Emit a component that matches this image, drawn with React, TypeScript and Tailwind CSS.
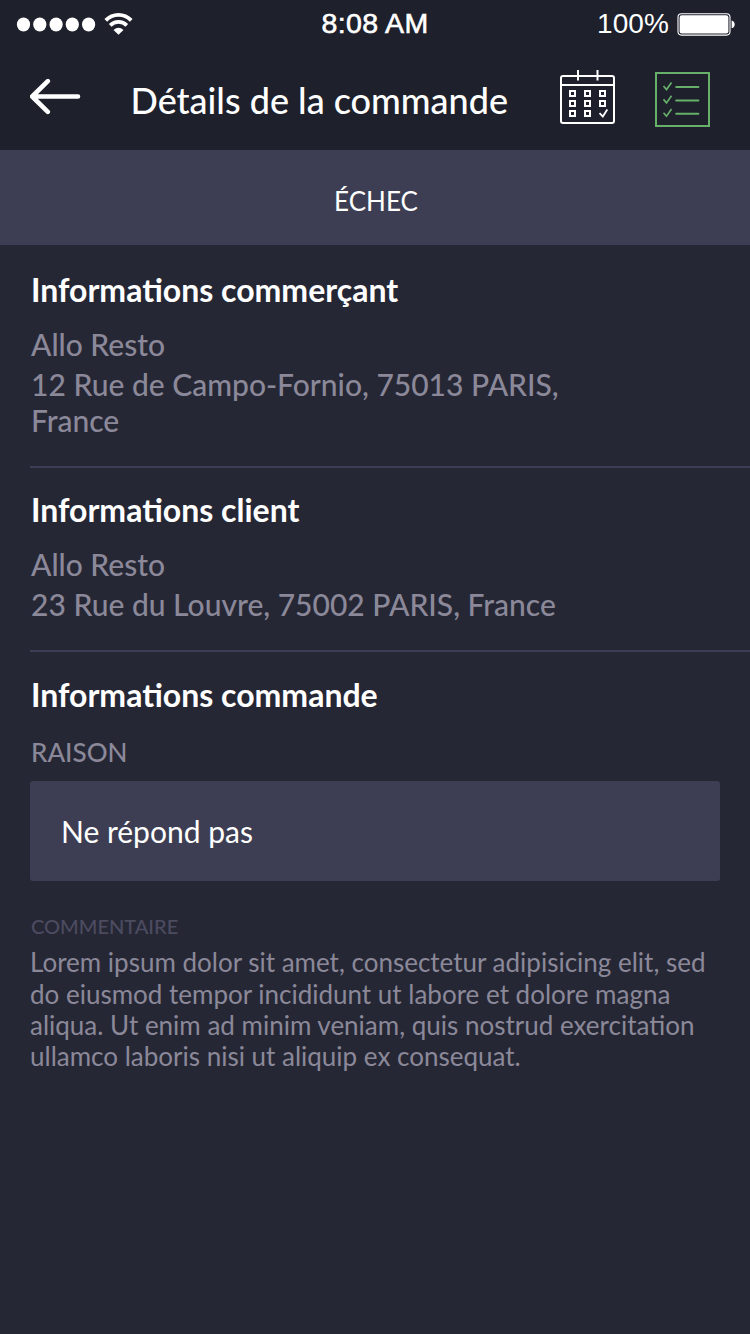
import type { ReactNode } from 'react';

function StatusBar() {
  return (
    <div className="flex h-12 items-center font-['Liberation_Sans',sans-serif] text-[29px] leading-[48px]">
      <div className="flex w-[250px] pl-4">
        <svg className="h-12 w-[120px]" viewBox="16 0 120 48" fill="#fff">
          <ellipse cx="23.5" cy="24.5" rx="6.6" ry="6.9" />
          <ellipse cx="39.8" cy="24.5" rx="6.6" ry="6.9" />
          <ellipse cx="56.1" cy="24.5" rx="6.6" ry="6.9" />
          <ellipse cx="72.3" cy="24.5" rx="6.6" ry="6.9" />
          <ellipse cx="88.6" cy="24.5" rx="6.6" ry="6.9" />
          <g fill="none" stroke="#fff" strokeWidth="3.8">
            <path d="M105.8 20.4 Q111 14.900 118.5 14.900 Q126 14.900 131.200 20.4" />
            <path d="M110.200 25.300 Q113.700 21.900 118.500 21.900 Q123.300 21.900 126.800 25.300" />
          </g>
          <path d="M113.500 29.900 Q118.500 25.600 123.500 29.900 L118.500 34.700 Z" />
        </svg>
      </div>
      <div className="flex w-[250px] justify-center">
        <span className="-mt-[3px] text-[28.5px] tracking-[0.35px] [-webkit-text-stroke:0.6px_#fff]">8:08 AM</span>
      </div>
      <div className="flex w-[250px] items-center justify-end pr-[15px]">
        <span className="mr-[8px] text-[28px] tracking-[0.1px]">100%</span>
        <svg className="h-12 w-[58px]" viewBox="677 0 58 48">
          <rect x="678" y="13.700" width="52" height="21.400" rx="3.500" fill="none" stroke="#fff" strokeWidth="1.100" />
          <rect x="679.600" y="15.300" width="48.800" height="18.200" rx="2.200" fill="#fff" />
          <path d="M731.600 20.500 Q734.700 21.500 734.700 24.400 Q734.700 27.300 731.600 28.300 Z" fill="#fff" />
        </svg>
      </div>
    </div>
  );
}

function BackArrow() {
  return (
    <svg className="h-9 w-[51px]" viewBox="30 79 51 36" fill="none" stroke="#fff" strokeWidth="4.600" strokeLinecap="round" strokeLinejoin="round">
      <path d="M78 96.500 H32.500 M47.800 81.200 L32.200 96.500 L47.800 111.800" />
    </svg>
  );
}

function CalendarIcon() {
  return (
    <svg className="h-[56px] w-[56px]" viewBox="560 69 56 56" fill="none" stroke="#fff" strokeWidth="2">
      <rect x="561" y="76" width="53" height="47" rx="2" />
      <path d="M561 85 H614 M578 70 V80.500 M597.500 70 V80.500" />
      {[569, 584, 599].map((x) =>
        [90, 100, 110].map((y) =>
          x === 599 && y === 110 ? null : (
            <rect key={`${x}-${y}`} x={x + 1} y={y + 1} width="5" height="5" />
          ),
        ),
      )}
      <path d="M599.500 113.200 L602.800 116.500 L607.300 109.500" strokeWidth="1.800" />
    </svg>
  );
}

function ChecklistIcon() {
  return (
    <svg className="h-[55px] w-[55px]" viewBox="655 72 55 55" fill="none" stroke="#66b06a" strokeWidth="2">
      <rect x="656" y="73" width="53" height="53" />
      {[87, 100.4, 113.7].map((y) => (
        <g key={y}>
          <path d={`M676.200 ${y} H698.400`} strokeLinecap="round" />
          <path d={`M663.500 ${y - 1} L666.500 ${y + 2.500} L671.500 ${y - 4.600}`} strokeWidth="1.700" />
        </g>
      ))}
    </svg>
  );
}

function Section({ title, className, children }: { title: string; className: string; children: ReactNode }) {
  return (
    <section className={`ml-[30px] border-b-2 border-[#3d3e53] pl-[1px] ${className}`}>
      <h2 className="text-[32px] leading-[38px] font-bold text-white">{title}</h2>
      {children}
    </section>
  );
}

export default function App() {
  return (
    <div className="h-[1334px] w-[750px] overflow-hidden bg-[#262735] font-[Lato,sans-serif] text-[#8b8999]">
      <header className="h-[150px] bg-[#1e202c] text-white">
        <StatusBar />
        <div className="flex h-[102px] items-start pl-[30px]">
          <div className="w-[100.5px] pt-[31px]">
            <BackArrow />
          </div>
          <h1 className="w-[429.5px] pt-[30px] text-[36px] leading-[44px] font-medium">Détails de la commande</h1>
          <div className="w-[95px] pt-[21px]">
            <CalendarIcon />
          </div>
          <div className="pt-6">
            <ChecklistIcon />
          </div>
        </div>
      </header>
      <div className="flex h-[95px] items-center justify-center bg-[#3d3e53] pt-[7px] pl-[2px] text-[26px] text-white">
        ÉCHEC
      </div>
      <main>
        <Section title="Informations commerçant" className="pt-[26px] pb-[28px]">
          <div className="pt-[17px] text-[30px] leading-9 font-medium">
            <p>Allo Resto</p>
            <p className="mt-1 w-[560px]">
              12 Rue de Campo-Fornio, 75013 PARIS,
              <br />
              France
            </p>
          </div>
        </Section>
        <Section title="Informations client" className="pt-[23px] pb-[28px]">
          <div className="pt-[17px] text-[30px] leading-9 font-medium">
            <p>Allo Resto</p>
            <p className="mt-1">23 Rue du Louvre, 75002 PARIS, France</p>
          </div>
        </Section>
        <section className="px-[30px] pt-6">
          <h2 className="pl-[1px] text-[32px] leading-[38px] font-bold text-white">Informations commande</h2>
          <p className="mt-[22px] pl-[1px] text-[26px] leading-8 font-medium">RAISON</p>
          <div className="mt-[13px] flex h-[100px] items-center rounded-[3px] bg-[#3d3e53] pl-[31px] text-[30px] leading-9 text-white">
            Ne répond pas
          </div>
          <p className="mt-[33px] pl-[1px] text-[20px] leading-6 font-medium text-[#4c4b60]">COMMENTAIRE</p>
          <p className="mt-[9.4px] text-[26px] leading-[31.2px]">
            Lorem ipsum dolor sit amet, consectetur adipisicing elit, sed
            <br />
            do eiusmod tempor incididunt ut labore et dolore magna
            <br />
            aliqua. Ut enim ad minim veniam, quis nostrud exercitation
            <br />
            ullamco laboris nisi ut aliquip ex consequat.
          </p>
        </section>
      </main>
    </div>
  );
}
